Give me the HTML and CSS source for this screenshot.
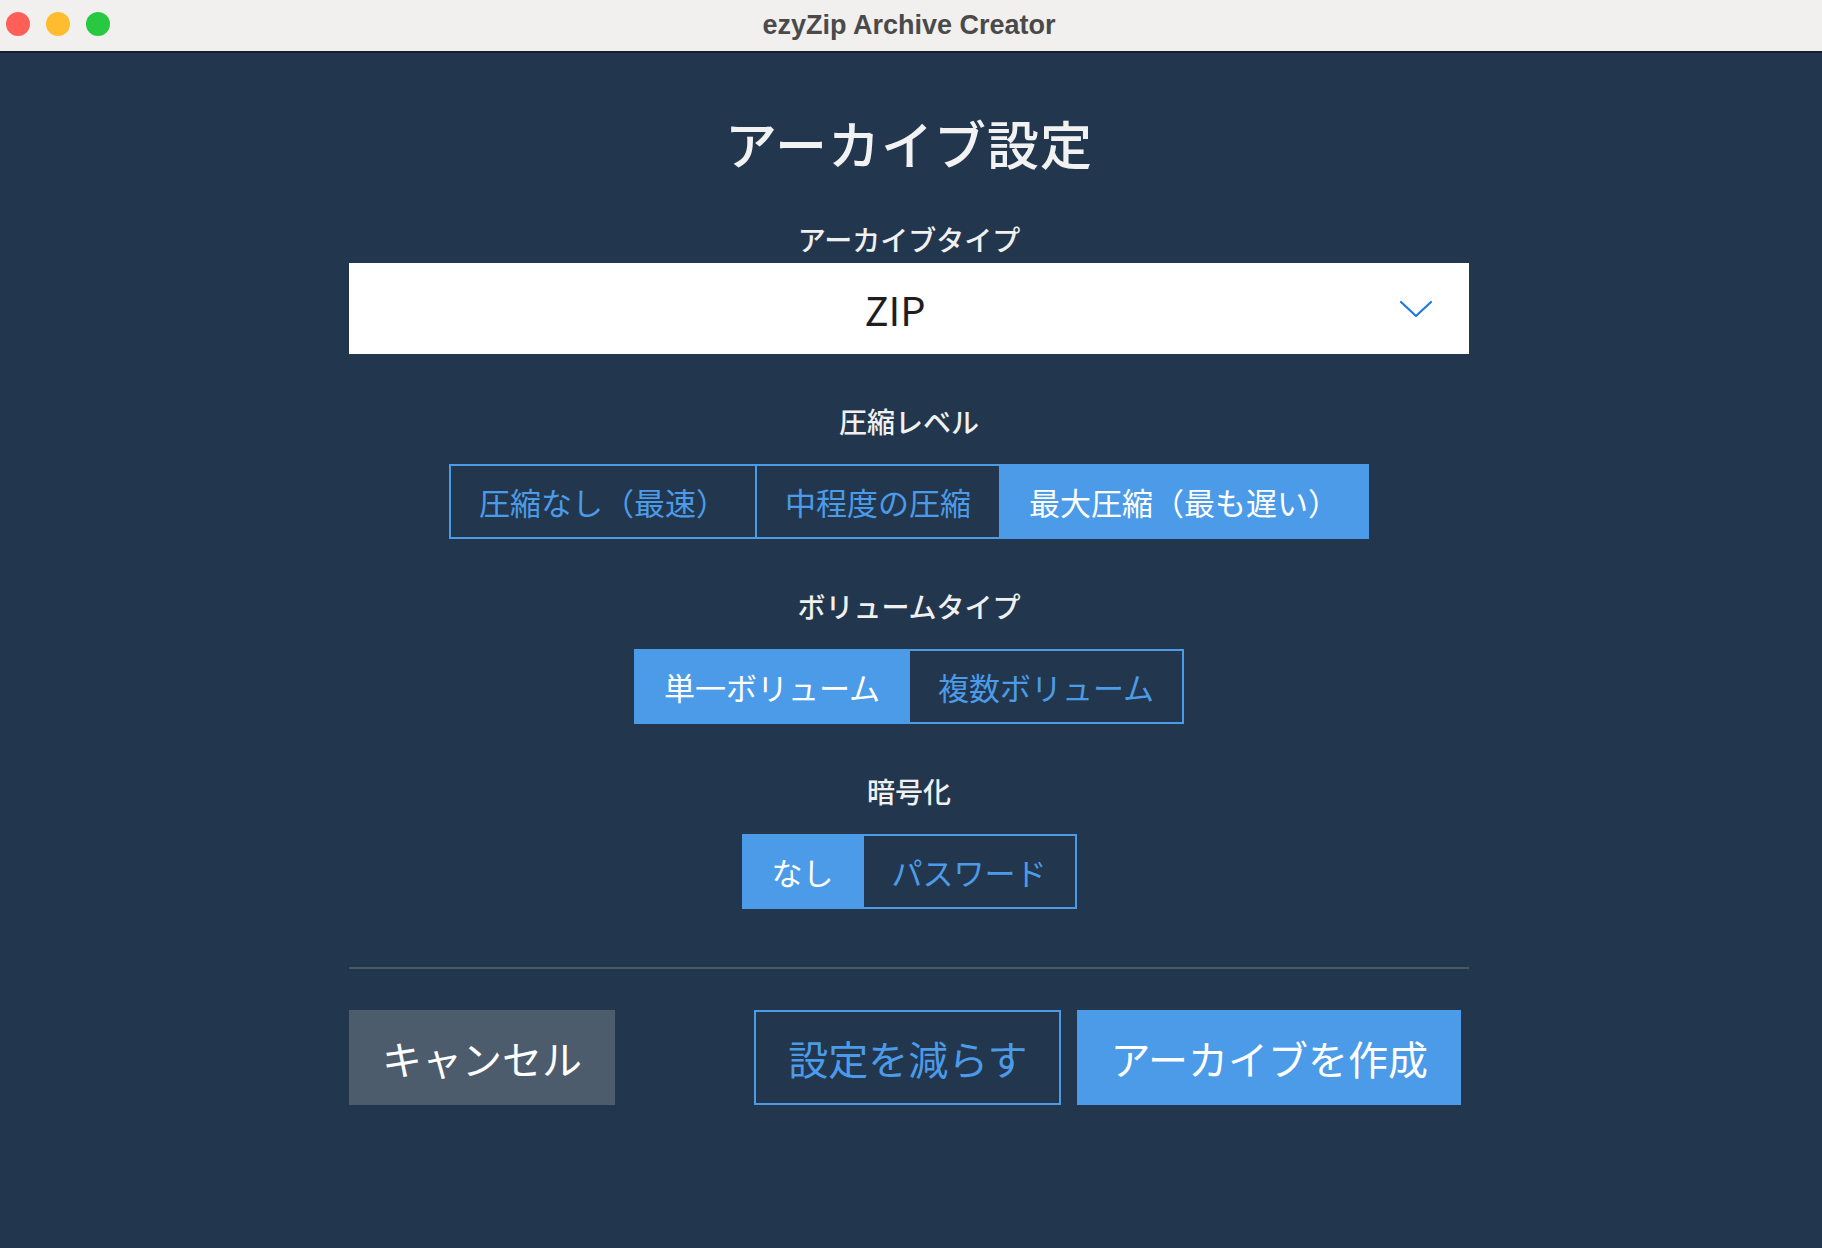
FILE: index.html
```
<!DOCTYPE html>
<html lang="ja">
<head>
<meta charset="utf-8">
<title>ezyZip Archive Creator</title>
<link rel="stylesheet" href="styles.css">
</head>
<body>
<div class="window">
  <header class="titlebar">
    <div class="lights">
      <span class="light red"></span>
      <span class="light yellow"></span>
      <span class="light green"></span>
    </div>
    <div class="title">ezyZip Archive Creator</div>
  </header>
  <main class="content">
    <h1 class="heading">アーカイブ設定</h1>

    <section class="field field-select">
      <div class="label">アーカイブタイプ</div>
      <div class="select">
        <span class="select-value">ZIP</span>
        <svg class="chevron" width="34" height="18" viewBox="0 0 34 18"><path d="M2 2 L17 16 L32 2" fill="none" stroke="#1f7ae0" stroke-width="2.2" stroke-linecap="round" stroke-linejoin="round"/></svg>
      </div>
    </section>

    <section class="field">
      <div class="label">圧縮レベル</div>
      <div class="segmented">
        <button class="seg">圧縮なし（最速）</button>
        <button class="seg">中程度の圧縮</button>
        <button class="seg active">最大圧縮（最も遅い）</button>
      </div>
    </section>

    <section class="field">
      <div class="label">ボリュームタイプ</div>
      <div class="segmented">
        <button class="seg active">単一ボリューム</button>
        <button class="seg">複数ボリューム</button>
      </div>
    </section>

    <section class="field">
      <div class="label">暗号化</div>
      <div class="segmented">
        <button class="seg active">なし</button>
        <button class="seg">パスワード</button>
      </div>
    </section>

    <hr class="divider">

    <div class="actions">
      <button class="btn btn-cancel">キャンセル</button>
      <div class="actions-right">
        <button class="btn btn-outline">設定を減らす</button>
        <button class="btn btn-primary">アーカイブを作成</button>
      </div>
    </div>
  </main>
</div>
</body>
</html>
```
FILE: styles.css
```
* { box-sizing: border-box; }
html, body {
  margin: 0;
  padding: 0;
  width: 1822px;
  height: 1248px;
  overflow: hidden;
  background: #22374e;
  font-family: "Noto Sans CJK JP", "Noto Sans", sans-serif;
}
.window {
  width: 1822px;
  height: 1248px;
  display: flex;
  flex-direction: column;
}
.titlebar {
  height: 53px;
  flex: none;
  background: #f1f0ee;
  border-bottom: 2px solid #15202c;
  display: flex;
  align-items: center;
  justify-content: center;
  position: relative;
}
.lights {
  position: absolute;
  left: 6px;
  top: 12px;
  display: flex;
  gap: 16px;
}
.light {
  width: 24px;
  height: 24px;
  border-radius: 50%;
  display: block;
}
.light.red { background: #fe5f57; }
.light.yellow { background: #febc2e; }
.light.green { background: #28c840; }
.title {
  font-family: "Liberation Sans", Arial, sans-serif;
  font-weight: bold;
  font-size: 27px;
  color: #4a4a4a;
  margin-left: -4px;
}
.content {
  width: 1120px;
  margin: 0 0 0 349px;
  display: flex;
  flex-direction: column;
  align-items: center;
}
.heading {
  margin: 50px 0 0;
  height: 80px;
  line-height: 80px;
  font-size: 52px;
  font-weight: 500;
  color: #f2f2f2;
  letter-spacing: 1px;
}
.field {
  width: 100%;
  display: flex;
  flex-direction: column;
  align-items: center;
  margin-top: 47px;
}
.field-select { margin-top: 36px; }
.label {
  height: 40px;
  line-height: 40px;
  font-size: 28px;
  font-weight: 500;
  color: #f0f0f0;
  margin-bottom: 23px;
}
.field-select .label { margin-bottom: 4px; }
.select {
  width: 100%;
  height: 91px;
  background: #ffffff;
  display: flex;
  align-items: center;
  justify-content: center;
  padding-right: 28px;
  position: relative;
}
.select-value {
  font-size: 40px;
  color: #1e1e1e;
  line-height: 1;
}
.chevron {
  position: absolute;
  right: 36px;
  top: 37px;
}
.segmented {
  display: flex;
  border: 2px solid #4c9be8;
  height: 75px;
}
.seg {
  font-family: inherit;
  font-size: 31px;
  color: #4c9be8;
  background: transparent;
  border: none;
  padding: 0 28px;
  height: 71px;
  line-height: 71px;
  white-space: nowrap;
  cursor: pointer;
}
.seg + .seg { border-left: 2px solid #4c9be8; }
.seg.active {
  background: #4c9be8;
  color: #ffffff;
}
.divider {
  width: 100%;
  margin: 58px 0 0;
  border: none;
  height: 2px;
  background: #475768;
}
.actions {
  width: 100%;
  margin-top: 41px;
  display: flex;
  justify-content: space-between;
}
.actions-right {
  display: flex;
  gap: 16px;
  margin-right: 8px;
}
.btn {
  font-family: inherit;
  font-size: 40px;
  height: 95px;
  padding: 0 33px;
  border: none;
  white-space: nowrap;
  cursor: pointer;
}
.btn-cancel {
  background: #4d5c6c;
  color: #ffffff;
}
.btn-outline {
  background: transparent;
  border: 2px solid #4c9be8;
  color: #4c9be8;
  padding: 0 32px;
}
.btn-primary {
  background: #4c9be8;
  color: #ffffff;
  padding: 0 33px;
}
```
